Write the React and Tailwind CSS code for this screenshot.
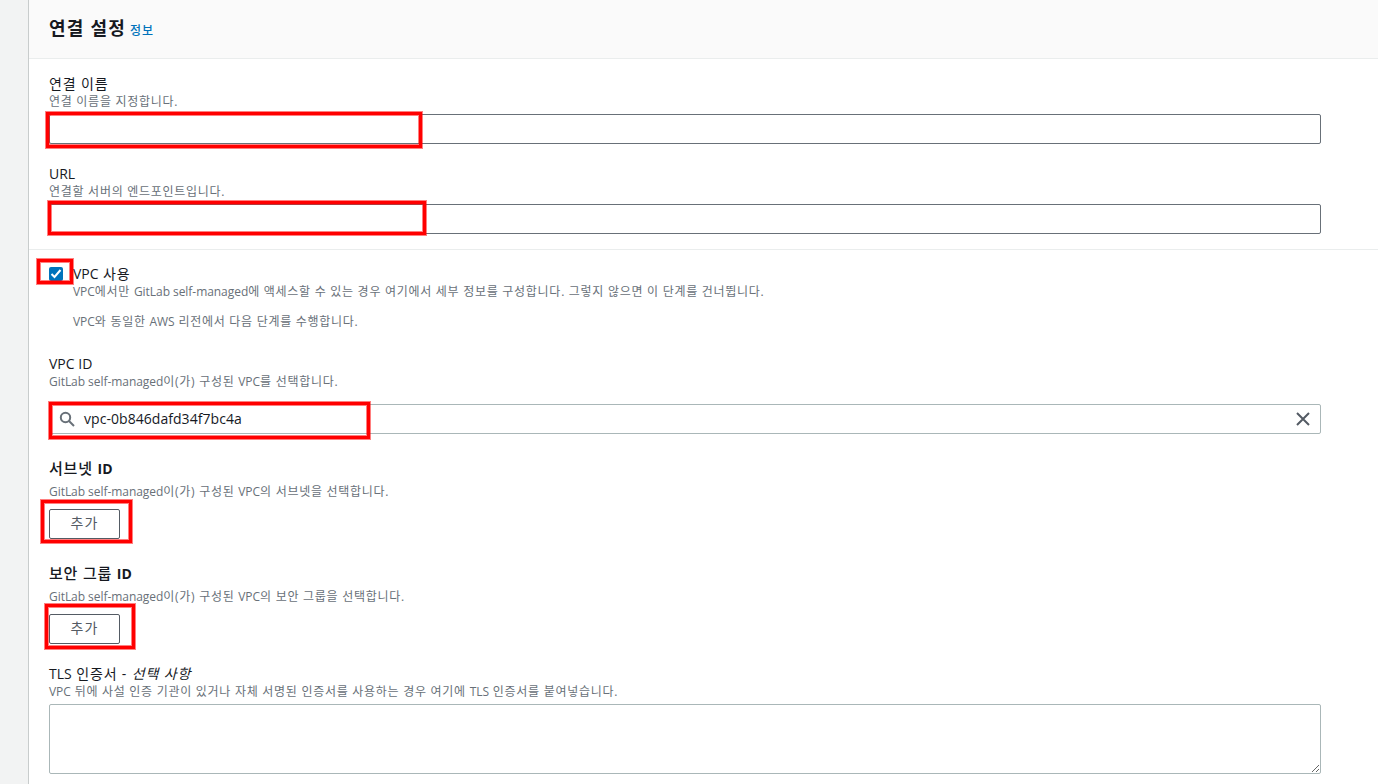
import React from 'react';

// red frames drawn over the form
const marks = [
    'left-[45px] top-[111px] w-[378px] h-[38px]',
    'left-[47px] top-[200px] w-[380px] h-[36px]',
    'left-[36px] top-[258px] w-[38px] h-[27px]',
    'left-[48px] top-[401px] w-[323px] h-[39px]',
    'left-[40px] top-[499px] w-[93px] h-[45px]',
    'left-[44px] top-[603px] w-[92px] h-[47px]',
];

const Mark = ({ className }) => (
    <div className={`absolute bg-transparent border border-[#ff000080] pointer-events-none ${className}`}>
        <div className="h-full border-[3px] border-[#ff0000] shadow-[inset_0_0_0_1px_#ff000080]" />
    </div>
);

// Hangul runs are set a little wider than the latin ones
const Mixed = ({ text, korean }) =>
    text.split(/([A-Za-z][A-Za-z-]*(?: [A-Za-z-]+)*)/).map((part, i) => (
        <span key={i} className={i % 2 ? '' : korean}>{part}</span>
    ));

const Label = ({ text, className = '', children }) => (
    <div className={`h-5 text-[14px] leading-5 text-[#16191f] whitespace-nowrap ${className}`}>
        <Mixed text={text} korean="tracking-[0.85px]" />
        {children}
    </div>
);

const SubHeading = ({ text }) => (
    <h3 className="h-5 mt-6 text-[14px] leading-5 font-bold text-[#16191f] whitespace-nowrap">
        <Mixed text={text} korean="text-[15px] font-medium tracking-[0.8px]" />
    </h3>
);

const Hint = ({ text, className = '' }) => (
    <div className={`h-4 text-[12px] leading-4 tracking-[-0.05px] text-[#687078] whitespace-nowrap ${className}`}>
        <Mixed text={text} korean="tracking-[0.72px]" />
    </div>
);

const AddButton = () => (
    <button className="block w-[71px] h-[30px] pb-[2px] rounded-[2px] border border-[#545b64] bg-white text-[14px] leading-[26px] tracking-[1px] text-[#545b64]">
        추가
    </button>
);

const SearchIcon = () => (
    <svg className="w-4 h-4 shrink-0" viewBox="0 0 16 16" fill="none" stroke="#687078" strokeWidth="2">
        <circle cx="6.5" cy="6.5" r="4.7" />
        <path d="M10 10l5 5" />
    </svg>
);

const CloseIcon = () => (
    <svg className="w-4 h-4 shrink-0" viewBox="0 0 16 16" fill="none" stroke="#545b64" strokeWidth="2">
        <path d="M2 2l12 12M14 2L2 14" />
    </svg>
);

const App = () => {
    return (
        <div className="relative flex w-[1378px] h-[784px] overflow-hidden bg-[#f2f3f3] font-['Open_Sans','Noto_Sans_CJK_KR',sans-serif]">
            <div className="w-7 shrink-0" />
            <main className="flex-1 border-l border-[#c8cccc] bg-white">
                <header className="flex items-baseline h-[59px] pl-5 pt-[15px] border-b border-[#eaeded] bg-[#fafafa]">
                    <h2 className="text-[18px] leading-[27px] font-bold tracking-[1.2px] text-[#16191f]">연결 설정</h2>
                    <a className="ml-1 text-[12px] font-medium tracking-[1px] text-[#0073bb]">정보</a>
                </header>

                <section className="h-[191px] pl-5 pr-[57px] pt-[15px] border-b border-[#eaeded]">
                    <Label text="연결 이름" />
                    <Hint text="연결 이름을 지정합니다." />
                    <div className="mt-1 h-[30px] rounded-[2px] border border-[#687078]" />
                    <Label text="URL" className="mt-5" />
                    <Hint text="연결할 서버의 엔드포인트입니다." />
                    <div className="mt-1 h-[30px] rounded-[2px] border border-[#687078]" />
                </section>

                <section className="pl-5 pr-[57px] pt-[14px]">
                    <div className="flex">
                        <div className="w-[14px] h-[14px] mt-[3px] rounded-[2px] bg-[#0073bb]">
                            <svg className="w-[14px] h-[14px]" viewBox="0 0 14 14" fill="none" stroke="white" strokeWidth="2">
                                <path d="M2.5 7l3 3 6-7" />
                            </svg>
                        </div>
                        <div className="ml-[10px]">
                            <Label text="VPC 사용" />
                            <Hint text="VPC에서만 GitLab self-managed에 액세스할 수 있는 경우 여기에서 세부 정보를 구성합니다. 그렇지 않으면 이 단계를 건너뜁니다." />
                            <Hint className="mt-[14px]" text="VPC와 동일한 AWS 리전에서 다음 단계를 수행합니다." />
                        </div>
                    </div>

                    <Label text="VPC ID" className="mt-6" />
                    <Hint text="GitLab self-managed이(가) 구성된 VPC를 선택합니다." />
                    <div className="flex items-center mt-[14px] h-[30px] pl-[9px] pr-[9px] rounded-[2px] border border-[#aab7b8]">
                        <SearchIcon />
                        <span className="flex-1 ml-[9px] text-[14px] leading-5 tracking-[0.05px] text-[#16191f]">vpc-0b846dafd34f7bc4a</span>
                        <CloseIcon />
                    </div>

                    <SubHeading text="서브넷 ID" />
                    <Hint className="mt-[6px]" text="GitLab self-managed이(가) 구성된 VPC의 서브넷을 선택합니다." />
                    <div className="mt-[9px]"><AddButton /></div>

                    <SubHeading text="보안 그룹 ID" />
                    <Hint className="mt-[6px]" text="GitLab self-managed이(가) 구성된 VPC의 보안 그룹을 선택합니다." />
                    <div className="mt-[9px]"><AddButton /></div>

                    <Label text="TLS 인증서 - " className="mt-5">
                        <i className="tracking-[0.85px]">선택 사항</i>
                    </Label>
                    <Hint text="VPC 뒤에 사설 인증 기관이 있거나 자체 서명된 인증서를 사용하는 경우 여기에 TLS 인증서를 붙여넣습니다." />
                    <textarea className="block mt-1 w-full h-[70px] rounded-[2px] border border-[#aab7b8] resize" />
                </section>
            </main>

            {marks.map((m) => (
                <Mark key={m} className={m} />
            ))}
        </div>
    );
};

export default App;
